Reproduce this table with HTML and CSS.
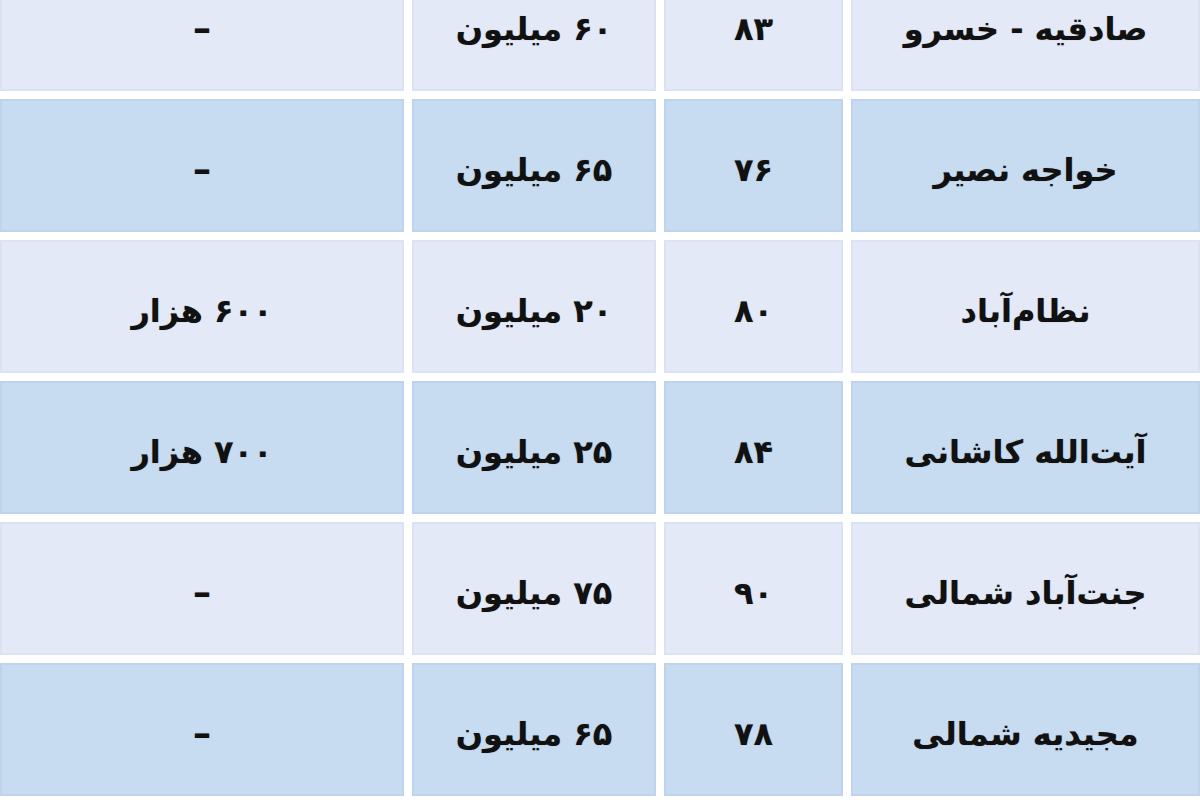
FILE: index.html
```html
<!DOCTYPE html>
<html lang="fa" dir="rtl">
<head>
<meta charset="utf-8">
<title>جدول قیمت</title>
<link rel="stylesheet" href="styles.css">
</head>
<body>
<div class="table">
  <div class="row light">
    <div class="cell name">صادقیه - خسرو</div>
    <div class="cell">۸۳</div>
    <div class="cell">۶۰ میلیون</div>
    <div class="cell dash">–</div>
  </div>
  <div class="row dark">
    <div class="cell name">خواجه نصیر</div>
    <div class="cell">۷۶</div>
    <div class="cell">۶۵ میلیون</div>
    <div class="cell dash">–</div>
  </div>
  <div class="row light">
    <div class="cell name">نظام‌آباد</div>
    <div class="cell">۸۰</div>
    <div class="cell">۲۰ میلیون</div>
    <div class="cell">۶۰۰ هزار</div>
  </div>
  <div class="row dark">
    <div class="cell name">آیت‌الله کاشانی</div>
    <div class="cell">۸۴</div>
    <div class="cell">۲۵ میلیون</div>
    <div class="cell">۷۰۰ هزار</div>
  </div>
  <div class="row light">
    <div class="cell name">جنت‌آباد شمالی</div>
    <div class="cell">۹۰</div>
    <div class="cell">۷۵ میلیون</div>
    <div class="cell dash">–</div>
  </div>
  <div class="row dark">
    <div class="cell name">مجیدیه شمالی</div>
    <div class="cell">۷۸</div>
    <div class="cell">۶۵ میلیون</div>
    <div class="cell dash">–</div>
  </div>
</div>
</body>
</html>
```

FILE: styles.css
```css
html, body {
  margin: 0;
  padding: 0;
  background: #ffffff;
  overflow: hidden;
}

body {
  width: 1200px;
  height: 800px;
  font-family: "DejaVu Sans", "Noto Sans", sans-serif;
  font-weight: bold;
  color: #111111;
}

.table {
  display: flex;
  flex-direction: column;
  gap: 8px;
  margin-top: -42px;
}

.row {
  display: grid;
  grid-template-columns: 349px 179px 244px 404px;
  column-gap: 8px;
  height: 133px;
}

.cell {
  display: flex;
  align-items: center;
  justify-content: center;
  padding-top: 8px;
  box-sizing: border-box;
  font-size: 32px;
  line-height: 1;
  white-space: nowrap;
  text-shadow: 0 0 1px rgba(0, 0, 0, 0.35);
}

.light .cell {
  background: #e3e9f6;
  box-shadow: inset 0 0 0 2px #dbe3f2;
}

.dark .cell {
  background: #c7dbf1;
  box-shadow: inset 0 0 0 2px #bfd3ec;
}

.dash {
  font-size: 36px;
}
```
